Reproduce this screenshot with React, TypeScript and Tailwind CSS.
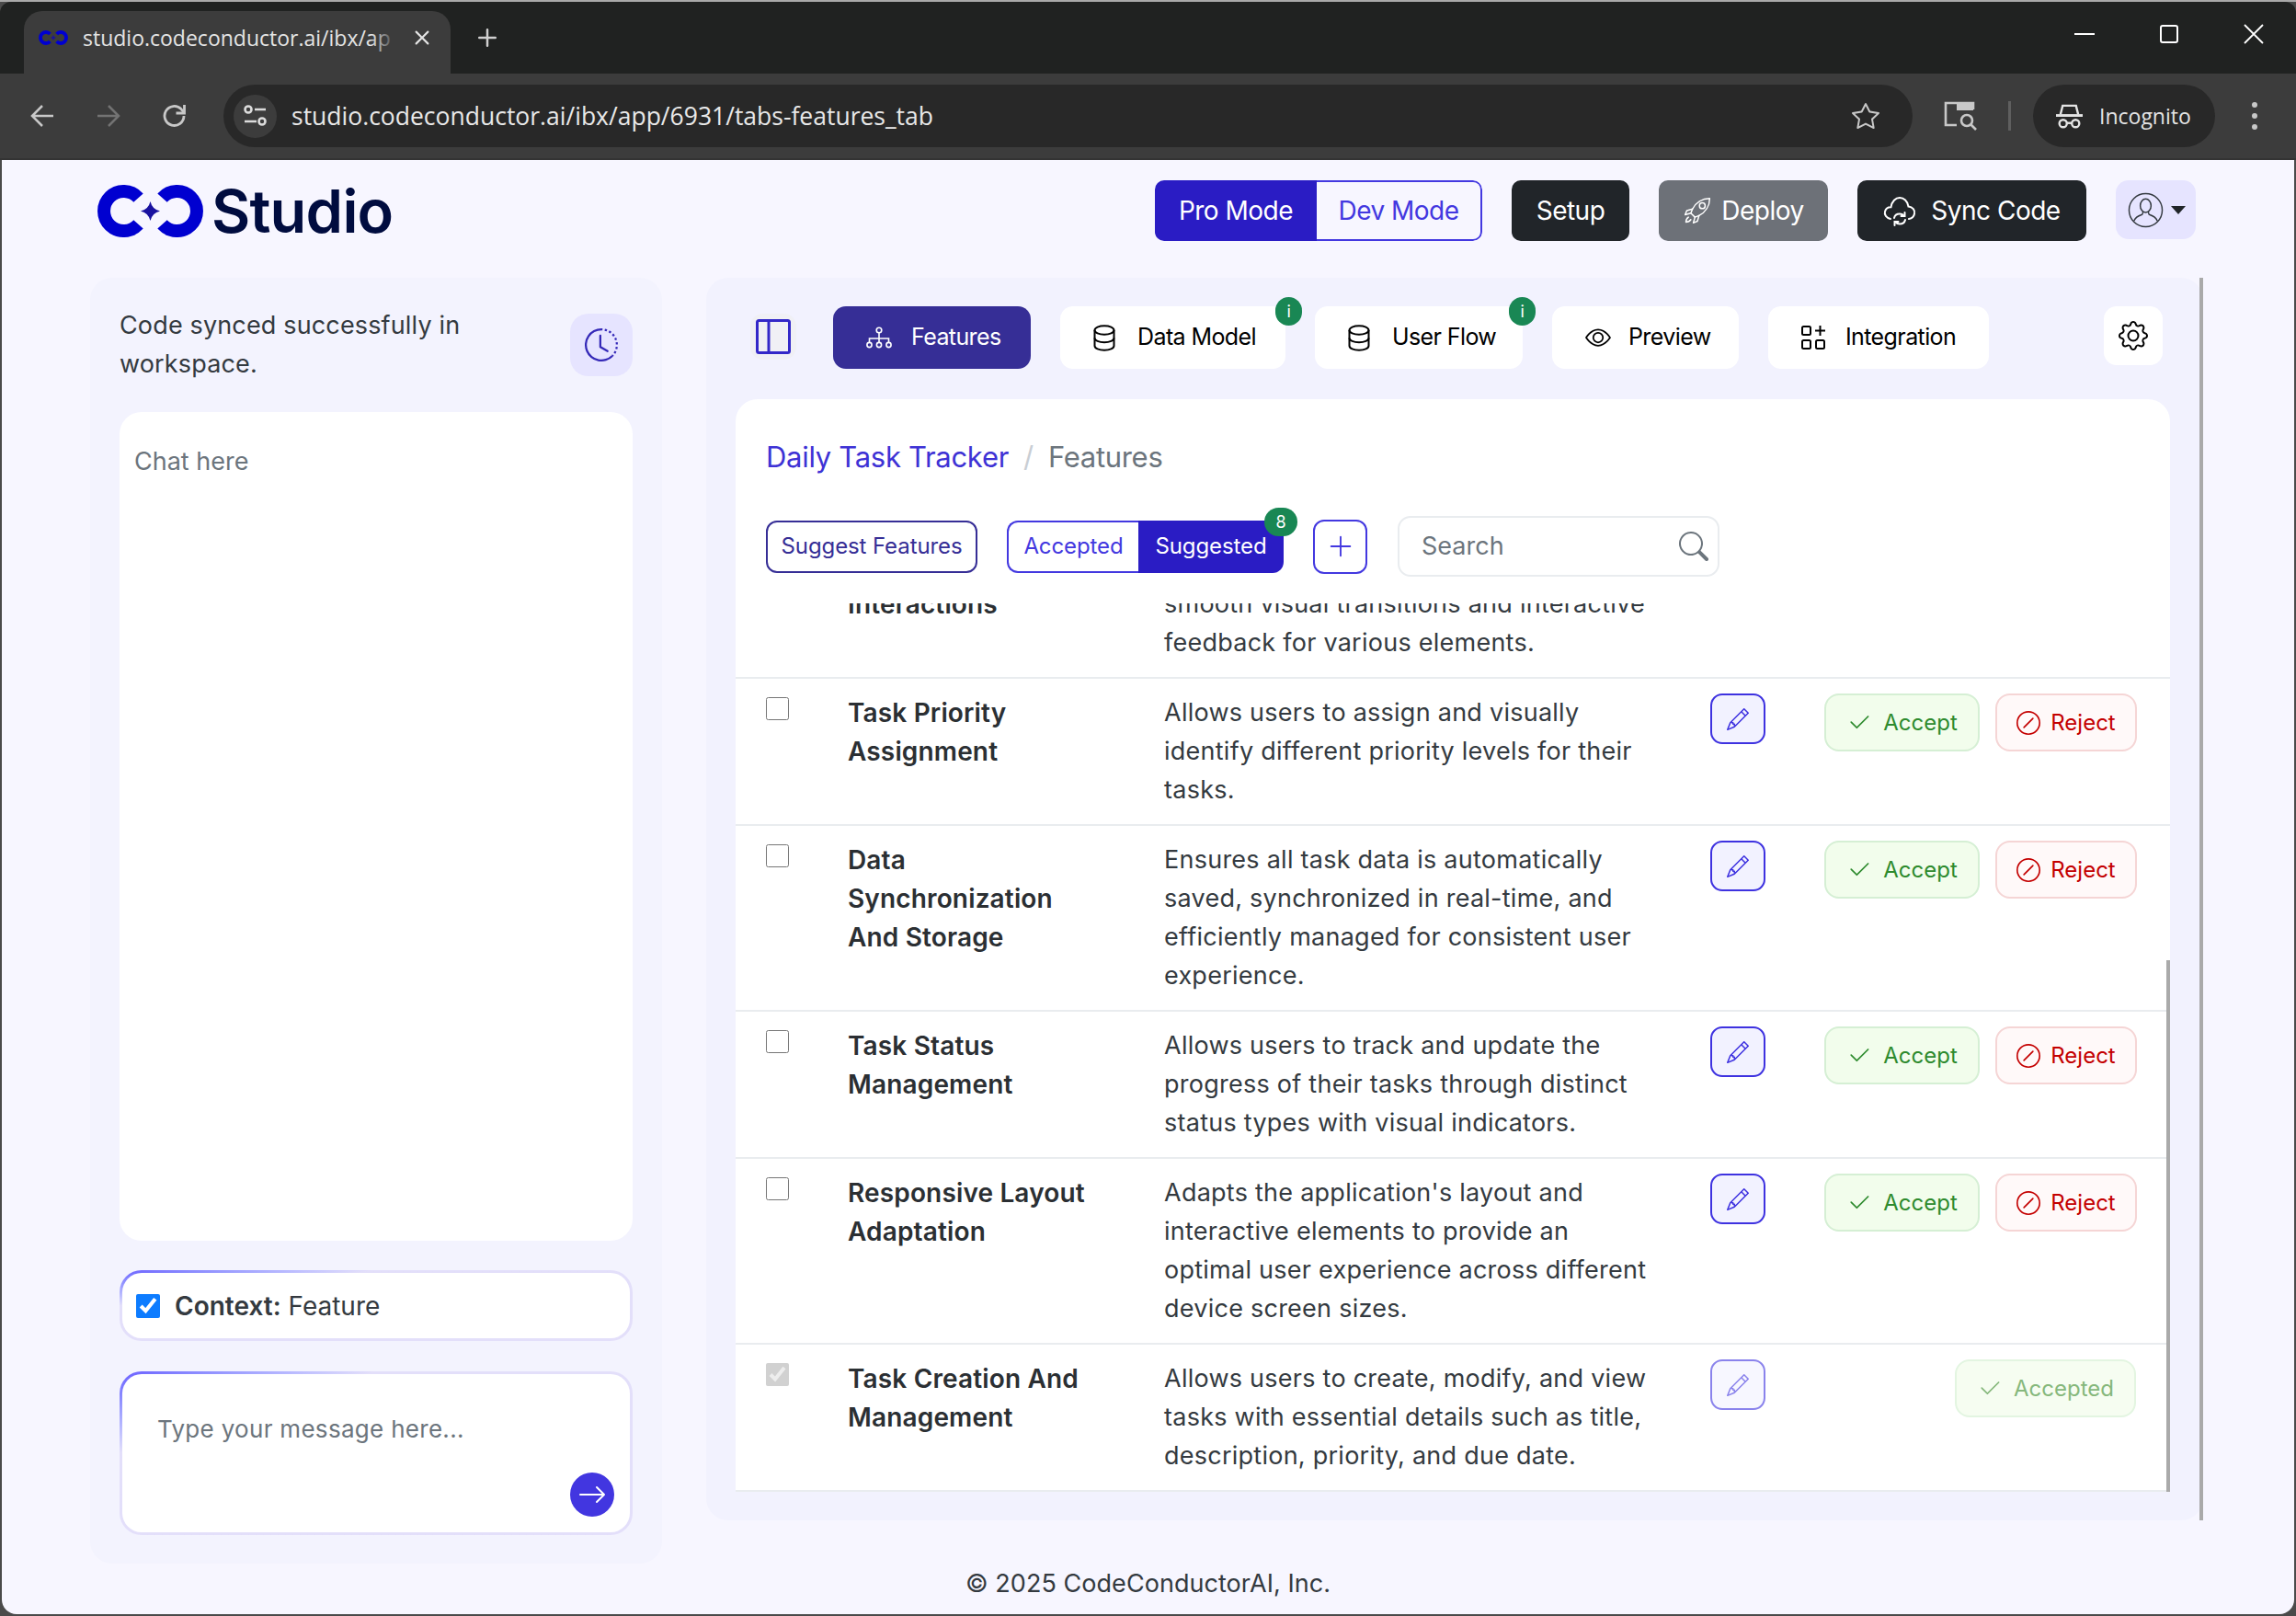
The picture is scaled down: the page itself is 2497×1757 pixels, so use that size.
import React from 'react';
import { BsArrowRight, BsCheck2, BsClockHistory, BsEye, BsGear, BsPencil, BsPlusLg, BsSearch, BsSlashCircle, BsStar, BsX, BsPlus } from 'react-icons/bs';

const Logo = ({ className }: { className: string }) => (
  <svg viewBox="0 0 115 57" className={className}>
    <path d="M44.5 14.1A21.5 21.5 0 1 0 44.5 42.9" fill="none" stroke="#0000d0" strokeWidth="14" />
    <path d="M70.5 14.1A21.5 21.5 0 1 1 70.5 42.9" fill="none" stroke="#0000d0" strokeWidth="14" />
    <path d="M57.5 18Q59.5 26.5 68 28.5Q59.5 30.5 57.5 39Q55.5 30.5 47 28.5Q55.5 26.5 57.5 18Z" fill="#1a12a0" />
  </svg>
);

const DiagramIcon = () => (
  <svg viewBox="0 0 28 24" className="w-[28px] h-[24px]" fill="none" stroke="currentColor" strokeWidth="1.6">
    <circle cx="14" cy="4" r="2.8" />
    <path d="M14 7v6M3.5 17v-4h21v4M14 13v4" />
    <circle cx="3.5" cy="20" r="2.6" />
    <circle cx="14" cy="20" r="2.6" />
    <circle cx="24.5" cy="20" r="2.6" />
  </svg>
);

const DatabaseIcon = () => (
  <svg viewBox="0 0 24 29" className="w-[24px] h-[29px]" fill="none" stroke="currentColor" strokeWidth="2">
    <ellipse cx="12" cy="6" rx="10.500" ry="4.800" />
    <path d="M1.500 6v17c0 2.800 4.700 4.800 10.500 4.800s10.500-2 10.500-4.800V6" />
    <path d="M1.500 14.500c0 2.800 4.700 4.800 10.500 4.800s10.500-2 10.500-4.800" />
  </svg>
);

const IntegrationIcon = () => (
  <svg viewBox="0 0 26 26" className="w-[26px] h-[26px]" fill="none" stroke="currentColor" strokeWidth="2">
    <rect x="1" y="1" width="9" height="9" rx="1.5" />
    <rect x="1" y="16" width="9" height="9" rx="1.5" />
    <rect x="16" y="16" width="9" height="9" rx="1.5" />
    <path d="M20.5 0v11M15 5.5h11" />
  </svg>
);

const CloudSyncIcon = () => (
  <svg viewBox="0 0 36 36" className="w-[36px] h-[36px]" fill="none" stroke="currentColor" strokeWidth="2" strokeLinecap="round">
    <path d="M8 27C3.500 26 1 22.500 2 19c.8-3 3.500-5 6.500-4.800C9.500 8 13.500 4 18 4s8.500 3.500 9.500 9.500C32 14 35 17.500 34 21.500c-.6 3-3 5-6 5.500" />
    <path d="M12 26c.6-3 3-4.500 6-4.500 2 0 3.500.8 4.500 2M24 28c-.6 3-3 4.500-6 4.500-2 0-3.500-.8-4.500-2" />
    <path d="M23.500 20v4h-4M12.500 34v-4h4" />
  </svg>
);

const RocketIcon = () => (
  <svg viewBox="0 0 36 36" className="w-[32px] h-[32px]" fill="none" stroke="currentColor" strokeWidth="1.700" strokeLinejoin="round" strokeLinecap="round">
    <path d="M33 3C24 3 16 8 12 16l-2 5 5 5 5-2c8-4 13-12 13-21Z" />
    <circle cx="24" cy="12" r="3.500" />
    <path d="M12 16l-7 2-2 5 7-2M20 24l-2 7-5 2 2-7" />
    <path d="M7 26c-3 2-3 5-3 6 1 0 4 0 6-3" />
  </svg>
);

const ProfileIcon = () => (
  <svg viewBox="0 0 40 40" className="w-[39px] h-[39px]" fill="none" stroke="#343a40" strokeWidth="1.500">
    <circle cx="20" cy="20" r="18.500" />
    <ellipse cx="20" cy="15" rx="6" ry="7.500" />
    <path d="M7 32c2-5 6-6 9-7 1-1 1-2 1-3.500M33 32c-2-5-6-6-9-7-1-1-1-2-1-3.500" />
  </svg>
);

const SidebarIcon = () => (
  <svg viewBox="0 0 38 38" className="w-[38px] h-[38px]" fill="none" stroke="#3328c8" strokeWidth="3">
    <rect x="1.500" y="1.500" width="35" height="35" rx="2" fill="#f0f0f5" />
    <path d="M14 1.500v35" />
  </svg>
);

const IncognitoIcon = () => (
  <svg viewBox="0 0 30 30" className="w-[29px] h-[29px]" fill="none" stroke="#e4e4e4" strokeWidth="2.500">
    <path d="M5 13l2.500-10h15L25 13" />
    <path d="M0 14h30" strokeWidth="3" />
    <circle cx="8" cy="23" r="4.200" />
    <circle cx="22" cy="23" r="4.200" />
    <path d="M12 22.500h6" />
  </svg>
);

const TabSearchIcon = () => (
  <svg viewBox="0 0 36 32" className="w-[36px] h-[32px]" fill="none" stroke="#c8c8c8" strokeWidth="2.600">
    <path d="M14 26H2V2h30v7" />
    <path d="M14 2h18v8H14z" fill="#c8c8c8" stroke="none" />
    <circle cx="25" cy="21" r="6" />
    <path d="M29.500 25.500L35 31" />
  </svg>
);

const SiteInfoIcon = () => (
  <svg viewBox="0 0 26 24" className="w-[26px] h-[24px]" fill="none" stroke="#dcdcdc" strokeWidth="2.600">
    <circle cx="5" cy="5" r="3.500" />
    <path d="M12 5h12M1 18h13" />
    <circle cx="20" cy="18" r="3.500" />
  </svg>
);

type Row = { title: string; desc: string; accepted?: boolean; partial?: boolean };

const rows: Row[] = [
  { title: 'Interactions', desc: 'smooth visual transitions and interactive feedback for various elements.', partial: true },
  { title: 'Task Priority Assignment', desc: 'Allows users to assign and visually identify different priority levels for their tasks.' },
  { title: 'Data Synchronization And Storage', desc: 'Ensures all task data is automatically saved, synchronized in real-time, and efficiently managed for consistent user experience.' },
  { title: 'Task Status Management', desc: 'Allows users to track and update the progress of their tasks through distinct status types with visual indicators.' },
  { title: 'Responsive Layout Adaptation', desc: "Adapts the application's layout and interactive elements to provide an optimal user experience across different device screen sizes." },
  { title: 'Task Creation And Management', desc: 'Allows users to create, modify, and view tasks with essential details such as title, description, priority, and due date.', accepted: true },
];

const tabs = [
  { label: 'Data Model', width: 'w-[245px]', gap: 'gap-[24px]', icon: <DatabaseIcon />, badge: '-right-[18px]' },
  { label: 'User Flow', width: 'w-[226px]', gap: 'gap-[24px]', icon: <DatabaseIcon />, badge: '-right-[14px]' },
  { label: 'Preview', width: 'w-[203px]', gap: 'gap-[19px]', icon: <BsEye className="w-[28px] h-[28px]" />, badge: '' },
  { label: 'Integration', width: 'w-[240px]', gap: 'gap-[22px]', icon: <IntegrationIcon />, badge: '' },
];

const FeatureRow = ({ row }: { row: Row }) => (
  <div className="grid grid-cols-[89px_344px_594px_124px_1fr] pl-[33px] py-[16px] border-b-2 border-[#e9ecef] shrink-0 leading-[42px]">
    <div className="pt-[4px]">
      {!row.partial && (
        <input
          type="checkbox"
          readOnly
          disabled={row.accepted}
          checked={!!row.accepted}
          className="block w-[25px] h-[25px] m-0"
        />
      )}
    </div>
    <div className="font-semibold text-[28px] tracking-[0.15px] text-[#2b2f33] pr-[60px]">{row.title}</div>
    <div className="text-[#343a40] tracking-[0.25px] pr-[60px]">{row.desc}</div>
    <div>
      {!row.partial && (
        <button className={`w-[60px] h-[55px] rounded-[13px] border-2 border-[#3e32e0] bg-[#f2f2ff] flex items-center justify-center text-[#3e32e0] ${row.accepted ? 'opacity-60' : ''}`}>
          <BsPencil className="w-[24px] h-[24px]" />
        </button>
      )}
    </div>
    <div className="flex justify-end items-start gap-[17px] pr-[37px] text-[24px]">
      {row.accepted && (
        <button className="w-[197px] h-[63px] rounded-[16px] border-2 border-[#e3f5e1] bg-[#f6fdf1] flex items-center justify-center gap-[12px] text-[#86b87c]">
          <BsCheck2 className="w-[28px] h-[28px]" />
          Accepted
        </button>
      )}
      {!row.accepted && !row.partial && (
        <>
          <button className="w-[169px] h-[63px] rounded-[16px] border-2 border-[#d5efd4] bg-[#f2fdec] flex items-center justify-center gap-[12px] text-[#2e8b2e]">
            <BsCheck2 className="w-[28px] h-[28px]" />
            Accept
          </button>
          <button className="w-[154px] h-[63px] rounded-[16px] border-2 border-[#f5d5d5] bg-[#fff9f9] flex items-center justify-center gap-[11px] text-[#c40000]">
            <BsSlashCircle className="w-[26px] h-[26px]" />
            Reject
          </button>
        </>
      )}
    </div>
  </div>
);

const App = () => {
  return (
    <div className="w-[2497px] h-[1757px] overflow-hidden bg-[#4a4a4a] font-['Inter',sans-serif] text-[27px]">
      <div className="h-[2px] bg-[#a9a9a9]" />

      {/* browser chrome */}
      <div className="h-[78px] bg-[#202221] rounded-t-[12px] flex items-end pl-[26px] font-['Open_Sans',sans-serif]">
        <div className="relative w-[464px] h-[68px] bg-[#3c3c3c] rounded-t-[20px] flex items-center pl-[16px] pb-[10px] text-[#e4e4e4] text-[23px]">
          <Logo className="w-[32px] h-[16px] shrink-0" />
          <span className="ml-[16px] whitespace-nowrap">studio.codeconductor.ai/ibx/ap</span>
          <div className="absolute left-[378px] top-0 w-[26px] h-full bg-linear-to-r from-transparent to-[#3c3c3c]" />
          <BsX className="ml-auto mr-[14px] w-[34px] h-[34px] text-[#e4e4e4]" />
        </div>
        <BsPlus className="ml-[20px] mb-[19px] w-[40px] h-[40px] text-[#d0d0d0]" />
        <div className="ml-auto h-full flex items-center pb-[8px] pr-[35px] gap-[71px] text-white">
          <div className="w-[22px] h-[2px] bg-white" />
          <div className="w-[20px] h-[20px] border-2 border-white rounded-[3px]" />
          <svg viewBox="0 0 22 22" className="w-[22px] h-[22px]" fill="none" stroke="#ffffff" strokeWidth="1.800">
            <path d="M1 1l20 20M21 1L1 21" />
          </svg>
        </div>
      </div>
      <div className="h-[94px] bg-[#3c3c3c] border-b-2 border-[#333333] flex items-center pl-[33px] font-['Open_Sans',sans-serif]">
        <svg viewBox="0 0 26 26" className="w-[26px] h-[26px] shrink-0" fill="none" stroke="#c8c8c8" strokeWidth="2.500">
          <path d="M25 13H2M13 2L2 13l11 11" />
        </svg>
        <svg viewBox="0 0 26 26" className="ml-[46px] w-[26px] h-[26px] shrink-0" fill="none" stroke="#737373" strokeWidth="2.500">
          <path d="M1 13h23M13 2l11 11-11 11" />
        </svg>
        <svg viewBox="0 0 26 26" className="ml-[46px] w-[26px] h-[26px] shrink-0" fill="none" stroke="#c8c8c8" strokeWidth="2.800">
          <path d="M23 13a10.500 10.500 0 1 1-3-7.400L23 9" />
          <path d="M23.500 1v9h-9" />
        </svg>
        <div className="ml-[40px] w-[1837px] h-[68px] rounded-full bg-[#282828] flex items-center pl-[11px] pr-[36px] shrink-0">
          <div className="w-[47px] h-[47px] rounded-full bg-[#3c3c3c] flex items-center justify-center shrink-0">
            <SiteInfoIcon />
          </div>
          <span className="ml-[16px] pt-[2px] text-[#e8e8e8] text-[26.500px] whitespace-nowrap">studio.codeconductor.ai/ibx/app/6931/tabs-features_tab</span>
          <BsStar className="ml-auto w-[30px] h-[30px] text-[#c8c8c8]" />
        </div>
        <div className="ml-[34px]"><TabSearchIcon /></div>
        <div className="ml-[34px] w-[3px] h-[32px] bg-[#5f5f5f]" />
        <div className="ml-[24px] w-[198px] h-[68px] rounded-full bg-[#282828] flex items-center pl-[25px] gap-[18px] text-[#e4e4e4] text-[23px]">
          <IncognitoIcon />
          Incognito
        </div>
        <div className="ml-[40px] flex flex-col gap-[6px]">
          <div className="w-[6px] h-[6px] rounded-full bg-[#c8c8c8]" />
          <div className="w-[6px] h-[6px] rounded-full bg-[#c8c8c8]" />
          <div className="w-[6px] h-[6px] rounded-full bg-[#c8c8c8]" />
        </div>
      </div>

      {/* page */}
      <div className="h-[1581px] mx-[2px] bg-[#f7f6ff] rounded-b-[16px] overflow-hidden">
        <header className="h-[128px] flex items-start pl-[104px] pr-[107px] pt-[22px]">
          <div className="flex items-center gap-[9px] pt-[5px]">
            <Logo className="w-[115px] h-[57px]" />
            <span className="text-[65px] leading-[57px] font-semibold text-[#000c3f] tracking-[-0.8px]">Studio</span>
          </div>
          <div className="ml-auto flex items-start gap-[32px] text-[28px] tracking-[-0.5px]">
            <div className="flex h-[66px] rounded-[10px] overflow-hidden">
              <button className="w-[176px] bg-[#2a1cc4] text-white">Pro Mode</button>
              <button className="w-[180px] border-2 border-l-0 border-[#4338e0] rounded-r-[10px] text-[#4338e0]">Dev Mode</button>
            </div>
            <button className="w-[128px] h-[66px] rounded-[10px] bg-[#212529] text-white">Setup</button>
            <button className="w-[184px] h-[66px] rounded-[10px] bg-[#6d7178] text-white flex items-center justify-center gap-[10px]">
              <RocketIcon />
              Deploy
            </button>
            <button className="w-[249px] h-[66px] rounded-[10px] bg-[#212529] text-white flex items-center justify-center gap-[16px]">
              <CloudSyncIcon />
              Sync Code
            </button>
            <button className="w-[87px] h-[64px] rounded-[14px] bg-[#e6e4ff] flex items-center pl-[13px] gap-[8px] text-[#343a40]">
              <ProfileIcon />
              <span className="w-0 h-0 border-x-[8px] border-x-transparent border-t-[9px] border-t-[#212529]" />
            </button>
          </div>
        </header>

        <div className="flex items-start h-[1398px] pl-[96px] gap-[48px]">
          {/* chat panel */}
          <aside className="w-[622px] h-full rounded-[24px] bg-[#f3f3fe] px-[32px] pt-[31px] flex flex-col">
            <div className="flex items-center justify-between text-[#343a40] tracking-[0.15px] leading-[42px]">
              <p className="w-[460px]">Code synced successfully in workspace.</p>
              <button className="w-[68px] h-[68px] rounded-[20px] bg-[#e6e4ff] flex items-center justify-center text-[#3529b8]">
                <BsClockHistory className="w-[36px] h-[36px]" />
              </button>
            </div>
            <div className="mt-[31px] h-[901px] rounded-[24px] bg-white px-[16px] py-[33px] text-[#6c757d] leading-[42px]">Chat here</div>
            <div className="mt-[32px] h-[77px] rounded-[24px] p-[3px] bg-linear-to-br from-[#6a5cff] via-[#e3dffa] via-25% to-[#e3dffa]">
              <div className="h-full rounded-[21px] bg-white flex items-center pl-[15px] gap-[16px] text-[28px] text-[#343a40]">
                <input type="checkbox" readOnly checked className="block w-[26px] h-[26px] m-0 accent-[#0d7cff]" />
                <span><b className="font-semibold">Context:</b> Feature</span>
              </div>
            </div>
            <div className="mt-[33px] h-[178px] rounded-[24px] p-[3px] bg-linear-to-br from-[#6a5cff] via-[#e3dffa] via-25% to-[#e3dffa]">
              <div className="h-full rounded-[21px] bg-white relative px-[38px] pt-[39px] text-[#6c757d] text-[26px] tracking-[0.3px] leading-[42px]">
                Type your message here...
                <button className="absolute right-[17px] bottom-[17px] w-[48px] h-[48px] rounded-full bg-[#4236e0] flex items-center justify-center text-white">
                  <BsArrowRight className="w-[32px] h-[32px]" />
                </button>
              </div>
            </div>
          </aside>

          {/* features panel */}
          <main className="relative w-[1628px] h-[1351px] rounded-[24px] bg-[#f2f2fe] pt-[31px] flex flex-col">
            <div className="absolute right-0 top-0 bottom-0 w-[4px] bg-[#aaaaaa]" />
            <div className="flex items-start pl-[48px] pr-[44px] text-[25px] tracking-[-0.6px] text-black h-[68px]">
              <button className="mt-[8px] w-[50px] h-[50px] rounded-[14px] bg-[#f0f0f5] flex items-center justify-center">
                <SidebarIcon />
              </button>
              <button className="ml-[40px] w-[215px] h-[68px] rounded-[14px] bg-[#362e96] text-white flex items-center pl-[36px] gap-[21px]">
                <DiagramIcon />
                Features
              </button>
              {tabs.map((tab) => (
                <button key={tab.label} className={`relative ml-[32px] ${tab.width} h-[68px] rounded-[14px] bg-white flex items-center pl-[36px] ${tab.gap}`}>
                  {tab.icon}
                  {tab.label}
                  {tab.badge && (
                    <span className={`absolute ${tab.badge} -top-[10px] w-[29px] h-[31px] rounded-full bg-[#198754] text-white text-[18px] leading-[31px] text-center`}>i</span>
                  )}
                </button>
              ))}
              <button className="ml-auto w-[64px] h-[64px] rounded-[14px] bg-white flex items-center justify-center">
                <BsGear className="w-[32px] h-[32px]" />
              </button>
            </div>

            <div className="relative mt-[33px] ml-[32px] w-[1560px] h-[1188px] rounded-t-[24px] bg-white flex flex-col">
              <div className="h-[222px] shrink-0 pl-[33px] pt-[43px]">
                <div className="h-[40px] flex items-center text-[31px] tracking-[-0.3px]">
                  <span className="text-[#3e32d5]">Daily Task Tracker</span>
                  <span className="mx-[16px] text-[#c9ced4]">/</span>
                  <span className="text-[#6c757d]">Features</span>
                </div>
                <div className="mt-[44px] h-[66px] flex items-center text-[24px] tracking-[-0.1px]">
                  <button className="w-[230px] h-[57px] rounded-[12px] border-2 border-[#362e96] text-[#362e96]">Suggest Features</button>
                  <div className="ml-[32px] relative flex h-[57px] w-[301px]">
                    <button className="w-[143px] rounded-l-[12px] border-2 border-r-0 border-[#4338e0] text-[#4338e0]">Accepted</button>
                    <button className="w-[158px] rounded-r-[12px] bg-[#2a1cc4] text-white">Suggested</button>
                    <span className="absolute -right-[15px] -top-[14px] w-[36px] h-[31px] rounded-full bg-[#198754] text-white text-[18px] leading-[31px] text-center">8</span>
                  </div>
                  <button className="ml-[32px] w-[59px] h-[59px] rounded-[12px] border-2 border-[#4338e0] text-[#4338e0] flex items-center justify-center">
                    <BsPlusLg className="w-[30px] h-[30px]" />
                  </button>
                  <div className="ml-[33px] w-[350px] h-[66px] rounded-[14px] border-2 border-[#e9ecef] flex items-center pl-[24px] pr-[10px] text-[27px] tracking-normal text-[#6c757d]">
                    Search
                    <BsSearch className="ml-auto w-[32px] h-[32px]" />
                  </div>
                </div>
              </div>
              <div className="relative flex-1 overflow-hidden flex flex-col justify-end">
                {rows.map((row) => (
                  <FeatureRow key={row.title} row={row} />
                ))}
              </div>
              <div className="absolute right-0 top-[610px] bottom-0 w-[4px] bg-[#aaaaaa]" />
            </div>
          </main>
        </div>

        <footer className="mt-[2px] h-[40px] leading-[40px] text-center text-[#343a40] text-[27px] tracking-[0.05px]">© 2025 CodeConductorAI, Inc.</footer>
      </div>
    </div>
  );
};

export default App;
